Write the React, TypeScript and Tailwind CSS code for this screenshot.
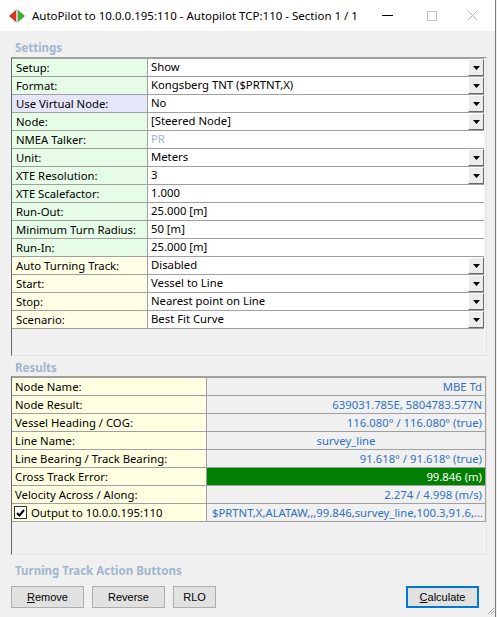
import React from "react"

// Settings / results rows for the autopilot dialog
type SettingRow = {
  label: string
  value: string
  tint: "green" | "lavender" | "yellow"
  dropdown?: boolean
  dim?: boolean
}

const settings: SettingRow[] = [
  { label: "Setup:", value: "Show", tint: "green", dropdown: true },
  { label: "Format:", value: "Kongsberg TNT ($PRTNT,X)", tint: "green", dropdown: true },
  { label: "Use Virtual Node:", value: "No", tint: "lavender", dropdown: true },
  { label: "Node:", value: "[Steered Node]", tint: "green", dropdown: true },
  { label: "NMEA Talker:", value: "PR", tint: "green", dim: true },
  { label: "Unit:", value: "Meters", tint: "green", dropdown: true },
  { label: "XTE Resolution:", value: "3", tint: "green", dropdown: true },
  { label: "XTE Scalefactor:", value: "1.000", tint: "green" },
  { label: "Run-Out:", value: "25.000 [m]", tint: "green" },
  { label: "Minimum Turn Radius:", value: "50 [m]", tint: "green" },
  { label: "Run-In:", value: "25.000 [m]", tint: "green" },
  { label: "Auto Turning Track:", value: "Disabled", tint: "yellow", dropdown: true },
  { label: "Start:", value: "Vessel to Line", tint: "yellow", dropdown: true },
  { label: "Stop:", value: "Nearest point on Line", tint: "yellow", dropdown: true },
  { label: "Scenario:", value: "Best Fit Curve", tint: "yellow", dropdown: true },
]

const tintClass = {
  green: "bg-[#e6fce6]",
  lavender: "bg-[#e6e6fa]",
  yellow: "bg-[#ffffe6]",
}

type ResultRow = {
  label: string
  value: string
  align: "right" | "center" | "left"
  highlight?: boolean
}

const results: ResultRow[] = [
  { label: "Node Name:", value: "MBE Td", align: "right" },
  { label: "Node Result:", value: "639031.785E, 5804783.577N", align: "right" },
  { label: "Vessel Heading / COG:", value: "116.080° / 116.080° (true)", align: "right" },
  { label: "Line Name:", value: "survey_line", align: "center" },
  { label: "Line Bearing / Track Bearing:", value: "91.618° / 91.618° (true)", align: "right" },
  { label: "Cross Track Error:", value: "99.846 (m)", align: "right", highlight: true },
  { label: "Velocity Across / Along:", value: "2.274 / 4.998 (m/s)", align: "right" },
]

function DropButton() {
  return (
    <div className="ml-auto mr-0 flex h-[17px] w-[16px] items-center justify-center border border-t-white border-l-white border-r-[#696969] border-b-[#696969] bg-[#ececec]">
      <svg width="7" height="4" viewBox="0 0 7 4">
        <polygon points="0,0 7,0 3.5,4" fill="#000" />
      </svg>
    </div>
  )
}

function SectionTitle({ children }: { children: React.ReactNode }) {
  return (
    <div className="h-[17px] pl-[15px] text-[11.5px] leading-[17px] font-bold text-[#a3b6ce]">
      {children}
    </div>
  )
}

function AppIcon() {
  return (
    <svg width="16" height="14" viewBox="0 0 16 14">
      <polygon points="0,7 7,1 7,13" fill="#e0311d" />
      <polygon points="16,7 9,1 9,13" fill="#3cae2c" />
      <rect x="7.5" y="0" width="1" height="14" fill="#9a9a9a" />
    </svg>
  )
}

export default function App() {
  return (
    <div className="relative h-[617px] w-[497px] overflow-hidden bg-[#f0f0f0] font-['Segoe_UI','Noto_Sans',sans-serif] text-[11.3px] text-black">
      <div className="h-full w-[496px] border-r border-[#7a7a7a]">
        {/* Title bar */}
        <div className="flex h-[31px] items-center bg-white">
          <div className="ml-[9px] mr-[7px]">
            <AppIcon />
          </div>
          <span className="text-[11.5px]">AutoPilot to 10.0.0.195:110 - Autopilot TCP:110 - Section 1 / 1</span>
          <div className="ml-auto flex items-center">
            <div className="h-px w-[11px] bg-black" />
            <div className="ml-[34px] h-[10px] w-[10px] border border-[#c4c4c4]" />
            <svg className="ml-[30px] mr-[17px]" width="11" height="11" viewBox="0 0 11 11">
              <path d="M0.5 0.5 L10.5 10.5 M10.5 0.5 L0.5 10.5" stroke="#b8b8b8" strokeWidth="1" />
            </svg>
          </div>
        </div>

        <div className="pt-[8px]">
          <SectionTitle>Settings</SectionTitle>

          {/* Settings grid */}
          <div className="ml-[11px] mt-[1px] h-[299px] w-[476px] border border-t-[#a0a0a0] border-l-[#696969] border-r-[#e3e3e3] border-b-[#e3e3e3]">
            <div className="w-[472px] border-t border-[#a0a0a0]">
              {settings.map((row) => (
                <div key={row.label} className="flex h-[18px] border-b border-[#a0a0a0]">
                  <div className={`w-[136px] border-r border-[#a0a0a0] pl-[4px] leading-[17px] ${tintClass[row.tint]}`}>
                    {row.label}
                  </div>
                  <div className="flex flex-1 items-center bg-white pl-[3px]">
                    <span className={row.dim ? "text-[#a3b6ce]" : ""}>{row.value}</span>
                    {row.dropdown && <DropButton />}
                  </div>
                </div>
              ))}
            </div>
          </div>

          <div className="mt-[3px]">
            <SectionTitle>Results</SectionTitle>
          </div>

          {/* Results grid */}
          <div className="ml-[11px] h-[179px] w-[476px] border border-t-[#a0a0a0] border-l-[#696969] border-r-[#e3e3e3] border-b-[#e3e3e3]">
            <div className="w-[474px] border-t border-[#a0a0a0]">
              {results.map((row) => (
                <div key={row.label} className="flex h-[18px] border-b border-[#a0a0a0]">
                  <div className="w-[195px] border-r border-[#a0a0a0] bg-[#ffffe1] pl-[3px] leading-[17px]">
                    {row.label}
                  </div>
                  <div
                    className={`flex-1 border-r border-[#a0a0a0] px-[3px] leading-[17px] ${
                      row.highlight ? "bg-[#008000] text-white" : "bg-[#f0f0f0] text-[#2f72c1]"
                    } ${row.align === "right" ? "text-right" : row.align === "center" ? "text-center" : "text-left"}`}
                  >
                    {row.value}
                  </div>
                </div>
              ))}
              <div className="flex h-[18px] border-b border-[#a0a0a0]">
                <div className="flex w-[195px] items-center border-r border-[#a0a0a0] bg-[#ffffe1] pl-[2px] leading-[17px]">
                  <div className="mr-[4px] flex h-[13px] w-[13px] items-center justify-center border border-[#333] bg-white">
                    <svg width="9" height="8" viewBox="0 0 9 8">
                      <path d="M1 4 L3.5 6.5 L8 1" stroke="#000" strokeWidth="2" fill="none" />
                    </svg>
                  </div>
                  Output to 10.0.0.195:110
                </div>
                <div className="flex-1 overflow-hidden text-ellipsis whitespace-nowrap border-r border-[#a0a0a0] bg-[#f0f0f0] pl-[5px] pr-[2px] leading-[17px] text-[#2f72c1]">
                  $PRTNT,X,ALATAW,,,99.846,survey_line,100.3,91.6,...
                </div>
              </div>
            </div>
          </div>

          <div className="mt-[7px]">
            <SectionTitle>Turning Track Action Buttons</SectionTitle>
          </div>

          {/* Action buttons */}
          <div className="mt-[7px] flex pl-[11px] pr-[16px] font-['Liberation_Sans',sans-serif] text-[11px]">
            <button className="h-[22px] w-[73px] border border-[#adadad] bg-[#e1e1e1]">
              <span className="underline">R</span>emove
            </button>
            <button className="ml-[8px] h-[22px] w-[73px] border border-[#adadad] bg-[#e1e1e1]">Reverse</button>
            <button className="ml-[8px] h-[22px] w-[43px] border border-[#adadad] bg-[#e1e1e1]">RLO</button>
            <button className="ml-auto h-[22px] w-[73px] border-2 border-[#0078d7] bg-[#e1e1e1]">
              <span className="underline">C</span>alculate
            </button>
          </div>
        </div>
      </div>

      {/* Resize grip */}
      <svg className="absolute bottom-[2px] right-[2px]" width="10" height="10" viewBox="0 0 10 10">
        <path d="M9 3 L3 9 M9 6 L6 9" stroke="#a8a8a8" strokeWidth="1" />
      </svg>
    </div>
  )
}
